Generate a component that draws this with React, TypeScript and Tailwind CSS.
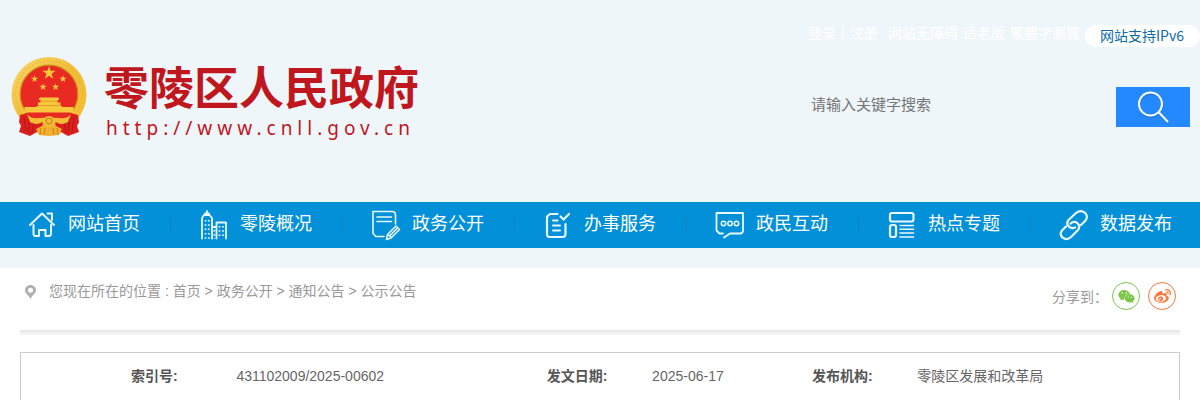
import type { ReactNode } from "react";
import { FaWeibo, FaWeixin } from "react-icons/fa";

const star = "M0,-1 L0.225,-0.309 L0.951,-0.309 L0.363,0.118 L0.588,0.809 L0,0.382 L-0.588,0.809 L-0.363,0.118 L-0.951,-0.309 L-0.225,-0.309 Z";

function Emblem() {
  return (
    <svg viewBox="0 0 78 82" className="h-[82px] w-[78px] shrink-0" aria-hidden="true">
      <defs>
        <linearGradient id="gold" x1="0" y1="0" x2="1" y2="1">
          <stop offset="0" stopColor="#f8d766" />
          <stop offset="0.5" stopColor="#f0bc38" />
          <stop offset="1" stopColor="#f5c030" />
        </linearGradient>
      </defs>
      <circle cx="39" cy="38.5" r="37.5" fill="url(#gold)" />
      <circle cx="39" cy="38.5" r="33.5" fill="none" stroke="#e2a930" strokeWidth="0.8" strokeDasharray="1.5 2.5" />
      <circle cx="39" cy="38" r="28.8" fill="#e92a22" stroke="#c98a1c" strokeWidth="1.2" />
      <g fill="#f8c83c">
        <path d={star} transform="translate(39 17) scale(7)" />
        <path d={star} transform="translate(24.5 23) scale(3.8)" />
        <path d={star} transform="translate(53 23) scale(3.8)" />
        <path d={star} transform="translate(33 31) scale(3.8)" />
        <path d={star} transform="translate(45.5 31) scale(3.8)" />
        <path d="M29 42.5 L30 41.5 H48 L49 42.5 V44 H47.5 V46.5 H50.5 V50 H52 V51 H63.5 V56.5 H14.5 V51 H26.5 V50 H28 V46.5 H30.5 V44 H29 Z" />
        <path d="M30.5 45.2 H47.5 M28 49.5 H50.5" stroke="#d88b1d" strokeWidth="0.7" />
      </g>
      <path d="M14.5 57.5 H63.5 L57 65 H21 Z" fill="#e92a22" />
      <path d="M10 59 L18 57 C22 63 27 66 33 66 L31 79 L27 76 L20 80 L9 76 L11 70 L9 66 Z" fill="#da1f1d" />
      <path d="M68 59 L60 57 C56 63 51 66 45 66 L47 79 L51 76 L58 80 L69 76 L67 70 L69 66 Z" fill="#da1f1d" />
      <path d="M14 61 L16 76 M19 62 L19 77 M24 66 L22 77 M64 61 L62 76 M59 62 L59 77 M54 66 L56 77" stroke="#a91415" strokeWidth="0.8" />
      <path d="M17 58 C23 65 29 61 34 62 C36 59.500 42 59.500 44 62 C49 61 55 65 61 58 L58 66 C53 69 48 68 46 66 C44 70 34 70 32 66 C30 68 25 69 20 66 Z" fill="#f4bd35" />
      <circle cx="39" cy="65" r="3" fill="#f4bd35" stroke="#c67a18" strokeWidth="1" />
      <path d="M26 73 L34 69 L39 71 L44 69 L52 73 L49 79 L39 80 L29 79 Z" fill="#f0b02d" />
      <path d="M31 72 L30 79 M35 72 L34 79 M43 72 L44 79 M47 72 L48 79" stroke="#d1701d" strokeWidth="0.8" />
    </svg>
  );
}

function NavSvg({ children }: { children: ReactNode }) {
  return (
    <svg viewBox="0 0 32 32" className="size-8 shrink-0" fill="none" stroke="#e9f8ff" strokeWidth="1.8" strokeLinejoin="round" strokeLinecap="round" aria-hidden="true">
      {children}
    </svg>
  );
}

const navItems: { label: string; icon: ReactNode }[] = [
  {
    label: "网站首页",
    icon: (
      <NavSvg>
        <path d="M4 16 L16 4.500 L28 16 M21.500 4.500 H26 V11 M7.500 16 V24.500 Q7.500 27 9.500 27 H13 V21 H19.500 V27 H22.500 Q25 27 25 24.500 V16" strokeWidth="2" />
      </NavSvg>
    ),
  },
  {
    label: "零陵概况",
    icon: (
      <NavSvg>
        <path d="M4 29.500 V9 L6 6 H11.500 L14 9 V29.500 M7 6 V4.500 H11 V6 M9 4 V2 M14 18 H18.500 M18.500 29.500 V13.500 H28 V29.500" />
        <path d="M7.500 11 V30 M10.800 11 V30 M16.300 21 V30 M21.500 17 V28 M25 17 V28" strokeDasharray="1.500 2.800" strokeLinecap="butt" />
      </NavSvg>
    ),
  },
  {
    label: "政务公开",
    icon: (
      <NavSvg>
        <g strokeWidth="1.6">
          <path d="M14 27.500 H6 L3 24.500 V2.500 H22 Q25.500 2.500 25.500 6 V15 M7 8 H21.500 M7 12.500 H21.500" />
          <path d="M16.500 30.500 L17.500 25.500 L26 17 L29.500 20.500 L21 29 Z M18 25.500 L21 28.500 M20 26.500 L27.500 19" />
        </g>
      </NavSvg>
    ),
  },
  {
    label: "办事服务",
    icon: (
      <NavSvg>
        <path d="M15.500 5 H8 L5 7.500 V25 Q5 28 7.500 28 H20.500 Q23.500 28 23.500 25 V15" strokeWidth="2.2" />
        <path d="M11 11.500 H15.500 M11 16.500 H18 M11 21.500 H18" strokeWidth="2" />
        <path d="M18.500 7.500 L21.500 10.500 L27 5" strokeWidth="2.200" />
      </NavSvg>
    ),
  },
  {
    label: "政民互动",
    icon: (
      <NavSvg>
        <path d="M10 28.500 L16 24.500 H26.500 Q29 24 29 21.500 V4 H2.500 V21.500 L5.500 24.500 H9" />
        <g strokeWidth="1.500">
          <circle cx="9.500" cy="14.500" r="2.200" />
          <circle cx="16" cy="14.500" r="2.200" />
          <circle cx="22.500" cy="14.500" r="2.200" />
        </g>
      </NavSvg>
    ),
  },
  {
    label: "热点专题",
    icon: (
      <NavSvg>
        <g strokeWidth="2.200">
          <rect x="4" y="4" width="23.500" height="8.500" rx="2" />
          <rect x="4" y="16" width="6" height="12" rx="2" />
          <path d="M14 16.500 H27.500 M14 20.200 H27.500 M14 24 H27.500 M14 28 H27.500" strokeWidth="1.600" />
        </g>
      </NavSvg>
    ),
  },
  {
    label: "数据发布",
    icon: (
      <NavSvg>
        <path d="M17 18.500 C12 20.500 7 15.500 10.500 11 L18 4 C24 -1 32 5.500 27.500 11.500 L23 16" strokeWidth="2.200" />
        <path d="M12.500 14.500 C18 10.500 23.500 16 20 21 L13 28 C7.500 33 -0.500 27 4 21.500 L8 17.500" strokeWidth="2.200" />
      </NavSvg>
    ),
  },
];

const facts = [
  { label: "索引号:", value: "431102009/2025-00602" },
  { label: "发文日期:", value: "2025-06-17" },
  { label: "发布机构:", value: "零陵区发展和改革局" },
];

const crumbs = ["首页", "政务公开", "通知公告", "公示公告"];

export default function App() {
  return (
    <div className="bg-white font-['Liberation_Sans','Noto_Sans_CJK_SC',sans-serif] text-sm">
      <div className="bg-[#eef6fa] pb-5">
        <header className="flex h-[202px] justify-between pl-[10px] font-['Noto_Sans_CJK_SC',sans-serif]">
          <a href="#home" className="mt-14 flex items-start gap-4 self-start text-[#c0161d]">
            <Emblem />
            <span className="flex flex-col">
              <span className="text-[45px] leading-[60px] font-bold whitespace-nowrap">零陵区人民政府</span>
              <span className="pl-0.5 font-['Noto_Sans',sans-serif] text-[19px] leading-6 tracking-[5px] whitespace-nowrap">http://www.cnll.gov.cn</span>
            </span>
          </a>
          <div className="w-[392px] shrink-0">
            <div className="flex items-start pt-6 whitespace-nowrap text-white">
              <div className="flex leading-4">
                <a href="#login">登录</a>
                <span className="w-[14px] text-center">|</span>
                <a href="#register">注册</a>
                <a href="#accessible" className="ml-[10px]">网站无障碍</a>
                <a href="#elder" className="ml-[5px]">适老版</a>
                <a href="#traditional" className="ml-[5px]">繁體字瀏覽</a>
              </div>
              <a href="#ipv6" className="mt-px ml-[5px] flex-1 rounded-full bg-white pb-0.5 pl-[15px] leading-5 text-[#0b6aa6]">网站支持IPv6</a>
            </div>
            <form className="mt-10 mr-[10px] flex h-10">
              <input type="text" aria-label="搜索" placeholder="请输入关键字搜索" className="min-w-0 flex-1 bg-transparent pb-1.5 pl-[3px] text-[15px] text-[#555] outline-none placeholder:text-[#757575]" />
              <button type="button" aria-label="搜索" className="flex w-[74px] items-center justify-center bg-[#2489ff]">
                <svg viewBox="0 0 34 34" className="size-[34px]" fill="none" strokeLinecap="round" aria-hidden="true">
                  <g stroke="#1a6fd6" strokeWidth="2" opacity="0.6">
                    <circle cx="15" cy="15.500" r="11.500" />
                    <path d="M23.500 24 L32 33" />
                  </g>
                  <g stroke="#fff" strokeWidth="2">
                    <circle cx="14.500" cy="14" r="11.500" />
                    <path d="M23 22.500 L31.500 31.500" />
                  </g>
                </svg>
              </button>
            </form>
          </div>
        </header>
        <nav className="grid h-[46px] grid-cols-[repeat(6,172fr)_168fr] bg-[#0290d8] font-['Noto_Sans_CJK_SC',sans-serif]">
          {navItems.map((item, i) => (
            <a key={item.label} href={`#nav-${i}`} className="group flex min-w-0 items-center gap-[10px] pl-[26px] text-lg leading-[26px] whitespace-nowrap text-white">
              {item.icon}
              <span className="pb-1.5">{item.label}</span>
              <span className="mr-px ml-auto h-4 w-px bg-[#0a82c6] group-last:hidden" />
            </a>
          ))}
        </nav>
      </div>

      <main className="px-5">
        <div className="flex h-[62px] justify-between text-[#999]">
          <div className="flex items-start pt-[13px] pl-1">
            <svg viewBox="0 0 14 16" className="mt-[3px] h-4 w-[14px]" aria-hidden="true">
              <path d="M6.500 1 C3.300 1 1 3.300 1 6.300 C1 9.500 4.500 11 6.500 15 C8.500 11 12 9.500 12 6.300 C12 3.300 9.700 1 6.500 1 Z M6.500 3.800 A2.500 2.500 0 1 1 6.500 8.800 A2.500 2.500 0 1 1 6.500 3.800 Z" fill="#b0b0b0" fillRule="evenodd" />
            </svg>
            <p className="pl-[11px] leading-5">
              您现在所在的位置 :{" "}
              {crumbs.map((crumb, i) => (
                <span key={crumb}>
                  {i > 0 && " > "}
                  <a href={`#crumb-${i}`}>{crumb}</a>
                </span>
              ))}
            </p>
          </div>
          <div className="flex items-start gap-2 pt-[14px] pr-1">
            <span className="pt-[5px] leading-5 text-[#999]">分享到：</span>
            <a href="#wechat" aria-label="微信" className="-ml-1 flex size-7 items-center justify-center rounded-full border border-[#7bc549] text-[#7bc549]">
              <FaWeixin size={17} />
            </a>
            <a href="#weibo" aria-label="微博" className="flex size-7 items-center justify-center rounded-full border border-[#f0763f] text-[#ff763b]">
              <FaWeibo size={17} />
            </a>
          </div>
        </div>
        <div className="h-[6px] bg-linear-to-b from-[#e6e6e6] to-white" />
        <div className="mt-4 border border-[#ccc] pb-1">
          <table className="w-full table-fixed text-left leading-[46px] text-[#666]">
            <colgroup>
              <col className="w-[18.6%]" />
              <col className="w-[26.8%]" />
              <col className="w-[9.1%]" />
              <col className="w-[13.8%]" />
              <col className="w-[9.1%]" />
              <col />
            </colgroup>
            <tbody>
              <tr className="whitespace-nowrap">
                {facts.map((fact) => [
                  <th key={fact.label} scope="row" className="font-bold text-[#555] first:pl-[110px]">{fact.label}</th>,
                  <td key={fact.value}>{fact.value}</td>,
                ])}
              </tr>
            </tbody>
          </table>
        </div>
      </main>
    </div>
  );
}
